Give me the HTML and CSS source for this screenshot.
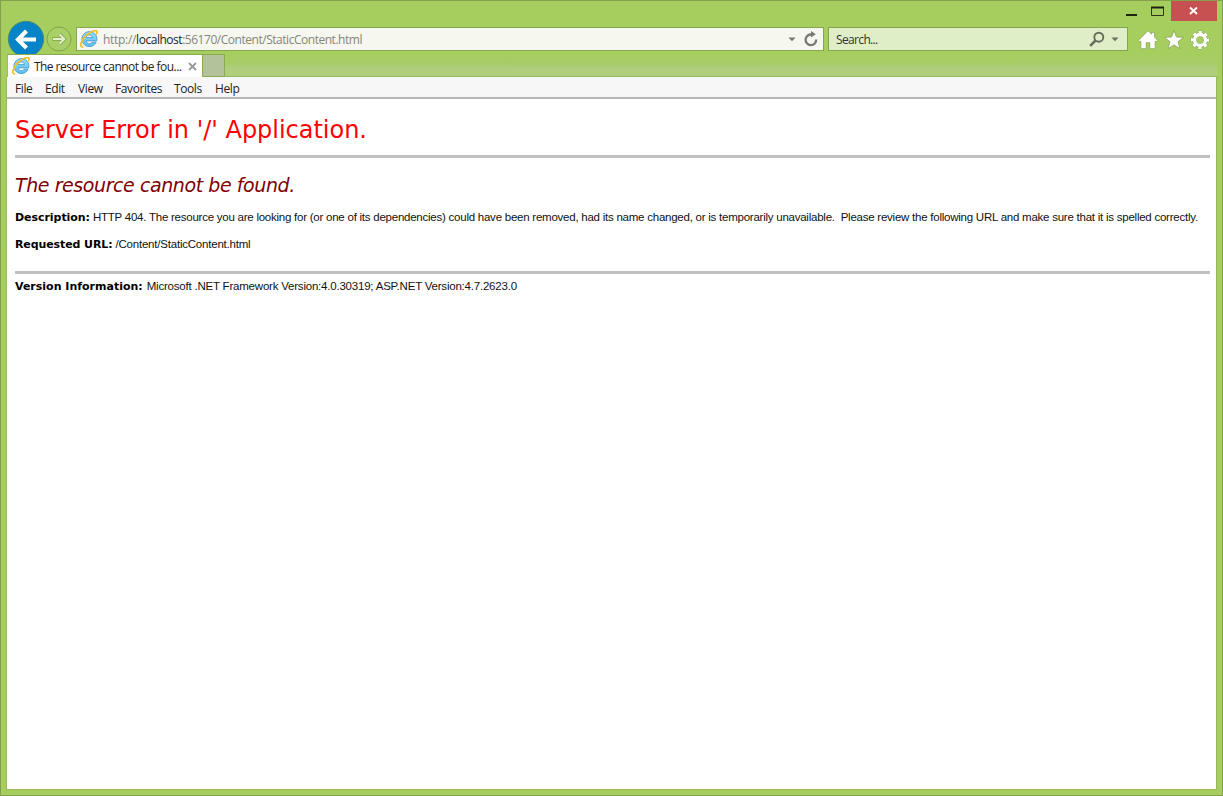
FILE: index.html
```html
<!DOCTYPE html>
<html lang="en">
<head>
<meta charset="utf-8">
<title>The resource cannot be found.</title>
<link rel="stylesheet" href="styles.css">
</head>
<body>
<svg width="0" height="0" class="defs">
  <defs>
    <linearGradient id="blue" x1="0" y1="0" x2="0" y2="1"><stop offset="0" stop-color="#8fdcfa"/><stop offset="1" stop-color="#5fc0f0"/></linearGradient>
    <symbol id="ie" viewBox="0 0 18 18">
      <path fill-rule="evenodd" d="M9.300 1.600a7.300 7.300 0 0 1 7.300 9.300H6.200c.3 3.400 4.600 3.600 5.900 1.300h4.100A7.500 7.500 0 1 1 9.300 1.600zM6.200 7.600h6.200c-.3-3.500-5.800-3.500-6.200 0z" fill="url(#blue)" stroke="#3a93cc" stroke-width=".8"/>
      <path d="M2.500 16.900C-.8 16.700 1 10.600 5.900 5.700 10.200 1.500 15.600-.600 16.700 1.300c.4.700.3 1.600-.1 2.500" fill="none" stroke="#f5c02a" stroke-width="1.800" stroke-linecap="round"/>
    </symbol>
  </defs>
</svg>
<div class="window">
  <div class="titlebar">
    <svg class="minimize" width="11" height="20"><path d="M0 14h11" stroke="#1e2410" stroke-width="2"/></svg>
    <svg class="maximize" width="13" height="20"><path d="M.5 6.500h12v8H.5z" fill="none" stroke="#2c3617"/><path d="M0 6.500h13" stroke="#1e2410" stroke-width="2"/></svg>
    <div class="close"><svg width="45" height="20"><path d="M19 6.500l7 6.500M26 6.500l-7 6.500" stroke="#fff" stroke-width="1.900"/></svg></div>
  </div>
  <div class="toolbar">
    <svg class="back" width="38" height="38" viewBox="0 0 38 38"><circle cx="19" cy="19" r="17.700" fill="#0783c8" stroke="#4c8a70"/><path d="M10.500 19.500H29M19.500 11l-8.500 8.500 8.500 8.500" fill="none" stroke="#fff" stroke-width="4.100"/></svg>
    <svg class="forward" width="26" height="26" viewBox="0 0 26 26"><circle cx="13" cy="13" r="12" fill="#a9cf67" stroke="#83a34a"/><path d="M6.500 13H18M13.500 8l5 5-5 5" fill="none" stroke="#83a34a" stroke-width="3.400"/><path d="M7 13H18M13.500 8.200l4.800 4.800-4.800 4.800" fill="none" stroke="#e3efcb" stroke-width="2"/></svg>
    <div class="address">
      <svg class="site" width="18" height="18"><use href="#ie"/></svg>
      <span class="url"><span class="scheme">http://</span><b>localhost</b>:56170/Content/StaticContent.html</span>
      <svg class="drop" width="8" height="5"><path d="M.5.500h7L4 4.300z" fill="#75786f"/></svg>
      <svg class="reload" width="14" height="16" viewBox="0 0 14 16"><path d="M12.200 8.500A5.300 5.300 0 1 1 8 3.600" fill="none" stroke="#777a73" stroke-width="2.300"/><path d="M7 0v6.400l4.800-3.100z" fill="#777a73"/></svg>
    </div>
    <div class="search">
      <span class="hint">Search...</span>
      <svg width="16" height="16" viewBox="0 0 16 16"><circle cx="9.800" cy="6.200" r="4.500" fill="none" stroke="#666c5b" stroke-width="1.900"/><path d="M6.700 9.300L1.200 14.800" stroke="#666c5b" stroke-width="2.600"/></svg>
      <svg class="find-drop" width="8" height="5"><path d="M.5.500h7L4 4.300z" fill="#6a705d"/></svg>
    </div>
    <div class="commands">
      <svg width="20" height="20" viewBox="0 0 20 20"><path d="M10 .7l3.500 3.400V2.400h3v4.700L19.600 10.400l-1.500 1.400-.9-.8v7.700h-5.400v-6H8.200v6H2.800V11l-.9.800L.4 10.400z" fill="#fff" stroke="#8ca65a" stroke-width=".8"/></svg>
      <svg width="20" height="20" viewBox="0 0 20 20"><path d="M10 .5l2.500 6.600 7.100.2-5.600 4.400 2 7L10 14.800l-6 3.900 2-7L.4 7.300l7.100-.2z" fill="#fff" stroke="#8ca65a" stroke-width=".8"/></svg>
      <svg width="20" height="20" viewBox="0 0 20 20"><g fill="none" stroke="#8ca65a"><circle cx="10" cy="10" r="5.500" stroke-width="4.400"/><circle cx="10" cy="10" r="8" stroke-width="3.200" stroke-dasharray="3.900 2.383" stroke-dashoffset="1.950"/></g><g fill="none" stroke="#fff"><circle cx="10" cy="10" r="5.500" stroke-width="3.300"/><circle cx="10" cy="10" r="7.700" stroke-width="2.800" stroke-dasharray="3.100 2.948" stroke-dashoffset="1.550"/></g></svg>
    </div>
  </div>
  <div class="tabs">
    <div class="tab">
      <svg width="18" height="18"><use href="#ie"/></svg>
      <span class="tab-title">The resource cannot be fou...</span>
      <svg class="tab-close" width="9" height="9"><path d="M1 1l7 7M8 1L1 8" stroke="#999" stroke-width="1.800"/></svg>
    </div>
    <div class="new-tab"></div>
    <div class="tab-space"></div>
  </div>
  <div class="content">
    <div class="menu"><span class="m1">File</span><span class="m2">Edit</span><span class="m3">View</span><span class="m4">Favorites</span><span class="m5">Tools</span><span class="m6">Help</span></div>
    <div class="page">
      <h1><span>Server Error in '/' Application.</span></h1>
      <hr>
      <h2><span>The resource cannot be found.</span></h2>
      <p class="description"><b>Description:</b><span class="description-text">HTTP 404. The resource you are looking for (or one of its dependencies) could have been removed, had its name changed, or is temporarily unavailable.&nbsp; Please review the following URL and make sure that it is spelled correctly.</span></p>
      <p class="requested"><b>Requested URL:</b><span>/Content/StaticContent.html</span></p>
      <hr>
      <p class="version"><b>Version Information:</b><span>Microsoft .NET Framework Version:4.0.30319; ASP.NET Version:4.7.2623.0</span></p>
    </div>
  </div>
</div>
</body>
</html>
```
FILE: styles.css
```css
* { box-sizing: border-box; }
body { margin: 0; overflow: hidden; font-family: "Open Sans", "Noto Sans", sans-serif; font-size: 12px; }
svg { display: block; flex: none; }
.defs { position: absolute; }
.window { width: 1223px; height: 796px; border: 1px solid #84a04c; background: #a5ce5e; display: flex; flex-direction: column; padding: 0 5px 5px; }
.titlebar { height: 26px; display: flex; justify-content: flex-end; align-items: flex-start; flex: none; }
.minimize { margin-right: 14px; }
.maximize { margin-right: 7px; }
.close { width: 46px; height: 20px; background: #c75050; }
.toolbar { height: 24px; display: flex; align-items: center; flex: none; }
.back { margin-left: 1px; }
.forward { margin-left: 1px; margin-right: 4px; }
.address, .search { height: 24px; border: 1px solid #87a54f; display: flex; align-items: center; white-space: nowrap; }
.address { width: 748px; background: #f6f8ef; padding: 0 5px 0 3px; margin-right: 4px; }
.url { color: #84857f; margin-left: 5px; flex: 1; letter-spacing: -.47px; }
.scheme { letter-spacing: -.3px; }
.url b { font-weight: 400; color: #222; }
.reload { margin-left: 8px; }
.search { width: 300px; background: #dfeec7; padding: 0 8px 0 7px; color: #333; }
.hint { flex: 1; letter-spacing: -.65px; }
.find-drop { margin-left: 6px; }
.commands { display: flex; gap: 6px; margin-left: 10px; padding-top: 2px; }
.tabs { height: 26px; padding: 3px 0 0 1px; display: flex; flex: none; position: relative; }
.tab { width: 195px; height: 23px; background: #fff; border-top: 1px solid #8aaa52; border-left: 1px solid #9bbb65; display: flex; align-items: center; padding-left: 4px; white-space: nowrap; color: #222; }
.tab-title { width: 149px; margin-left: 4px; letter-spacing: -.55px; }
.tab-close { margin-left: 5px; }
.new-tab { width: 23px; height: 23px; background: #b3c29b; border: 1px solid #8aaa52; }
.tab-space { flex: 1; background: linear-gradient(#a5ce5e, #a8cc69 45%, #b0ce7d 65%, #b1ce80); border-bottom: 1px solid #98ba5d; }
.content { flex: 1; border: 1px solid #98ba5d; border-top: 0; background: #fff; }
.menu { height: 22px; background: #f7f7f7; border-bottom: 2px solid #b6b6b6; display: flex; padding-left: 8px; color: #222; line-height: 23px; white-space: nowrap; letter-spacing: -.4px; }
.m1 { width: 30px; }
.m2 { width: 33px; }
.m3 { width: 37px; }
.m4 { width: 59px; }
.m5 { width: 41px; }
.page { padding: 0 6px 0 8px; font-family: "Liberation Sans", Arial, sans-serif; font-size: 11.500px; color: #111; }
h1, h2 { margin: 0; font-family: "DejaVu Sans", Verdana, sans-serif; font-weight: 400; white-space: nowrap; }
h1 { height: 56px; padding-top: 16px; color: #f00; font-size: 24px; line-height: 30px; letter-spacing: -.02px; }
h2 { height: 46px; padding-top: 14px; color: #800000; font-size: 19px; line-height: 26px; font-style: italic; letter-spacing: -.42px; }
hr { margin: 0; border: 0; height: 3px; background: #c0c0c0; }
p { margin: 0; height: 27px; display: flex; align-items: baseline; white-space: nowrap; line-height: 27px; letter-spacing: -.21px; }
p b { font-family: "DejaVu Sans", Verdana, sans-serif; font-size: 11px; color: #000; margin-right: 4px; flex: none; letter-spacing: -.05px; }
.description b { margin-right: 3px; }
.description-text { letter-spacing: -.24px; }
.requested b { margin-right: 3px; letter-spacing: -.1px; }
.requested { height: 40px; }
.version { line-height: 24px; }
.version b { letter-spacing: 0; }
```
